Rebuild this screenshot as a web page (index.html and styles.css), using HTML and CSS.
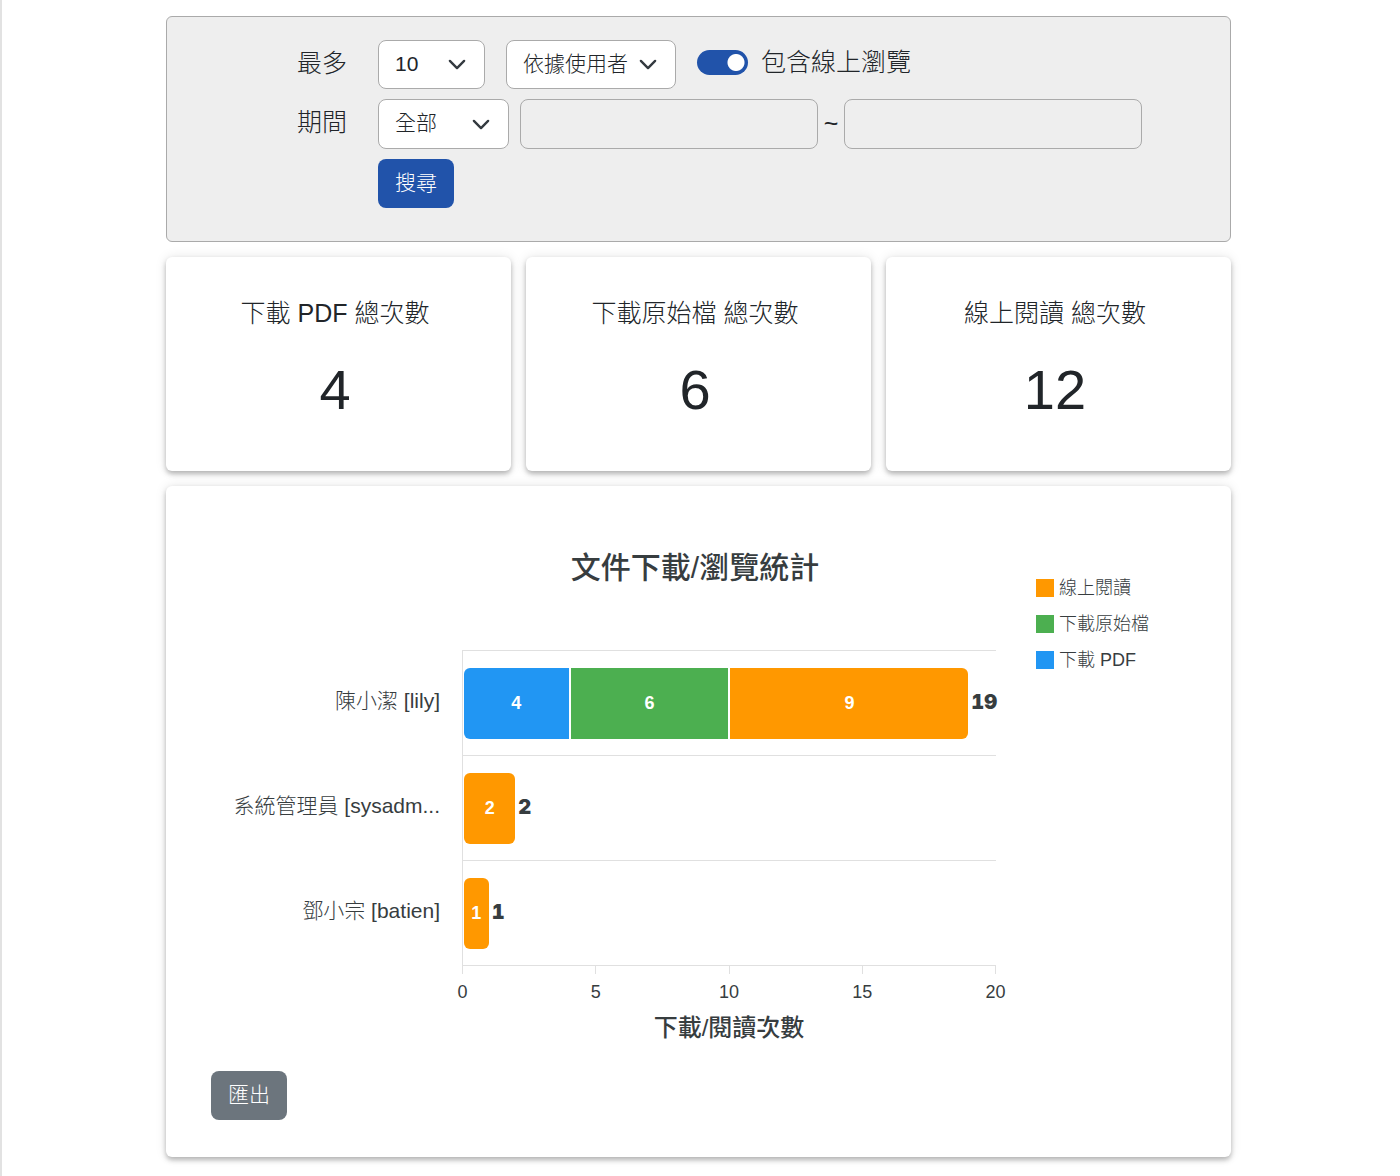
FILE: index.html
```html
<!DOCTYPE html>
<html lang="zh-Hant">
<head>
    <meta charset="UTF-8">
    <meta name="viewport" content="width=device-width, initial-scale=1.0">
    <title>文件下載/瀏覽統計</title>
    <link rel="stylesheet" href="styles.css">
</head>
<body>
    <main class="page">
        <form class="filter">
            <label class="filter-label" for="top-count">最多</label>
            <div class="filter-row">
                <select class="select select-count" id="top-count">
                    <option selected>10</option>
                    <option>20</option>
                    <option>50</option>
                </select>
                <select class="select select-group" aria-label="統計方式">
                    <option selected>依據使用者</option>
                    <option>依據文件</option>
                </select>
                <div class="switch">
                    <input type="checkbox" role="switch" id="include-view" checked>
                    <label for="include-view">包含線上瀏覽</label>
                </div>
            </div>

            <label class="filter-label" for="period">期間</label>
            <div class="filter-row period-row">
                <select class="select select-period" id="period">
                    <option selected>全部</option>
                    <option>自訂</option>
                </select>
                <div class="date-range">
                    <input type="text" class="date" aria-label="開始日期" disabled>
                    <span class="tilde">~</span>
                    <input type="text" class="date" aria-label="結束日期" disabled>
                </div>
            </div>

            <div class="filter-row filter-submit">
                <button type="button" class="btn btn-primary">搜尋</button>
            </div>
        </form>

        <section class="totals">
            <div class="card total">
                <h2>下載 PDF 總次數</h2>
                <p>4</p>
            </div>
            <div class="card total">
                <h2>下載原始檔 總次數</h2>
                <p>6</p>
            </div>
            <div class="card total">
                <h2>線上閱讀 總次數</h2>
                <p>12</p>
            </div>
        </section>

        <section class="card report">
            <div class="chart">
                <h1 class="chart-title">文件下載/瀏覽統計</h1>

                <ul class="legend">
                    <li><span class="swatch view"></span><span>線上閱讀</span></li>
                    <li><span class="swatch original"></span><span>下載原始檔</span></li>
                    <li><span class="swatch pdf"></span><span>下載 PDF</span></li>
                </ul>

                <div class="names">
                    <div>陳小潔 [lily]</div>
                    <div>系統管理員 [sysadm...</div>
                    <div>鄧小宗 [batien]</div>
                </div>

                <!-- bar widths are count / 20 -->
                <div class="plot">
                    <div class="bar-row">
                        <span class="bar pdf" style="width: 20%">4</span>
                        <span class="bar original" style="width: 30%">6</span>
                        <span class="bar view" style="width: 45%">9</span>
                        <span class="sum">19</span>
                    </div>
                    <div class="bar-row">
                        <span class="bar view" style="width: 10%">2</span>
                        <span class="sum">2</span>
                    </div>
                    <div class="bar-row">
                        <span class="bar view" style="width: 5%">1</span>
                        <span class="sum">1</span>
                    </div>
                </div>

                <div class="axis">
                    <div class="ticks">
                        <span>0</span>
                        <span>5</span>
                        <span>10</span>
                        <span>15</span>
                        <span>20</span>
                    </div>
                    <div class="axis-title">下載/閱讀次數</div>
                </div>
            </div>

            <button type="button" class="btn btn-secondary">匯出</button>
        </section>
    </main>
</body>
</html>
```
FILE: styles.css
```css
* {
    margin: 0;
    padding: 0;
    box-sizing: border-box;
    font-family: "Liberation Sans", "Noto Sans CJK TC", sans-serif;
}
body {
    font-size: 25px;
    font-weight: 300;
    color: #212529;
    background: #fff;
}
.page {
    display: flex;
    flex-direction: column;
    gap: 15px;
    min-height: 100vh;
    padding: 16px 169px 18px 164px;
    border-left: 2px solid #e2e2e2;
}

/* filter */
.filter {
    display: grid;
    grid-template-columns: 50px minmax(0, 1fr);
    gap: 10px 31px;
    padding: 23px 88px 33px 130px;
    border: 1px solid #aaa;
    border-radius: 6px;
    background: #eee;
}
.filter-label {
    line-height: 46px;
    white-space: nowrap;
}
.filter-row {
    display: flex;
    gap: 21px;
    height: 49px;
}
.period-row {
    gap: 11px;
    height: 50px;
}
.filter-submit {
    grid-column: 2;
}
.select {
    appearance: none;
    padding: 0 43px 3px 16px;
    border: 1px solid #aaa;
    border-radius: 8px;
    background: #fff url("data:image/svg+xml,%3csvg xmlns='http://www.w3.org/2000/svg' viewBox='0 0 16 16'%3e%3cpath fill='none' stroke='%23343a40' stroke-linecap='round' stroke-linejoin='round' stroke-width='2' d='m2 5 6 6 6-6'/%3e%3c/svg%3e") no-repeat right 17px center / 20px 19px;
    color: #212529;
    font-size: 21px;
    font-weight: 300;
}
.select-count {
    width: 107px;
}
.select-group {
    width: 170px;
}
.select-period {
    width: 131px;
}
.switch {
    display: flex;
    align-items: center;
    gap: 13px;
    height: 45px;
}
.switch input {
    appearance: none;
    width: 51px;
    height: 25px;
    border-radius: 13px;
    background: radial-gradient(circle at 39px 50%, #fff 8px, #2153aa 9px);
}
.switch label {
    padding-bottom: 5px;
}
.date-range {
    display: flex;
    flex: 1;
    min-width: 0;
}
.date {
    flex: 1;
    min-width: 0;
    padding: 0 17px;
    border: 1px solid #aaa;
    border-radius: 8px;
    background: transparent;
    font-size: 21px;
}
.tilde {
    width: 26px;
    line-height: 48px;
    text-align: center;
}
.btn {
    height: 49px;
    padding: 0 17px 5px;
    border: none;
    border-radius: 8px;
    color: #fff;
    font-size: 21px;
    font-weight: 300;
    cursor: pointer;
}
.btn-primary {
    background: #2153aa;
}
.btn-secondary {
    background: #6c757d;
}

/* cards */
.card {
    border-radius: 6px;
    background: #fff;
    box-shadow: 0 3px 5px rgba(0, 0, 0, 0.26), 0 0 12px rgba(0, 0, 0, 0.1);
}
.totals {
    display: grid;
    grid-template-columns: repeat(3, 1fr);
    gap: 15px;
}
.total {
    padding: 38px 22px 40px 15px;
    text-align: center;
}
.total h2 {
    font-size: 25px;
    font-weight: 300;
    line-height: 37px;
}
.total p {
    margin-top: 17px;
    font-size: 56px;
    line-height: 82px;
}
.report {
    padding: 67px 52px 37px 45px;
}

/* chart */
.chart {
    display: grid;
    grid-template-columns: 251px 1fr 183px;
    margin-bottom: 31px;
    color: #373d3f;
}
.chart-title {
    grid-area: 1 / 1 / 2 / 4;
    margin-bottom: 67px;
    font-size: 30px;
    font-weight: 500;
    line-height: 30px;
    text-align: center;
}
.legend {
    grid-area: 1 / 3 / 3 / 4;
    padding: 17px 0 0 40px;
    list-style: none;
    font-size: 18px;
}
.legend li {
    display: flex;
    align-items: center;
    gap: 5px;
    height: 36px;
    line-height: 36px;
}
.legend li span:last-child {
    height: 36px;
}
.swatch {
    width: 18px;
    height: 18px;
}
.pdf {
    background-color: #2196f3;
}
.original {
    background-color: #4caf50;
}
.view {
    background-color: #ff9800;
}
.names {
    grid-area: 2 / 1;
    padding-right: 22px;
    font-size: 21px;
    line-height: 101px;
    text-align: right;
    white-space: nowrap;
}
.names div {
    height: 105px;
}
.plot {
    grid-area: 2 / 2;
    border-left: 1px solid #e0e0e0;
    border-bottom: 1px solid #e0e0e0;
}
.bar-row {
    display: flex;
    align-items: center;
    height: 105px;
    border-top: 1px solid #e0e0e0;
}
.bar {
    flex: none;
    height: 73px;
    border: 1px solid transparent;
    background-clip: padding-box;
    color: #fff;
    font-size: 18px;
    font-weight: 700;
    line-height: 71px;
    text-align: center;
}
.bar:first-child {
    border-top-left-radius: 7px;
    border-bottom-left-radius: 7px;
}
.bar:nth-last-child(2) {
    border-top-right-radius: 7px;
    border-bottom-right-radius: 7px;
}
.sum {
    margin-left: 2px;
    padding-bottom: 2px;
    font-family: Inter, "Liberation Sans", sans-serif;
    font-size: 20px;
    font-weight: 900;
    font-variant-numeric: tabular-nums;
}
.axis {
    grid-area: 3 / 2;
}
.ticks {
    display: flex;
    justify-content: space-between;
    font-size: 18px;
    line-height: 20px;
}
.ticks span {
    display: flex;
    flex-direction: column;
    align-items: center;
    gap: 8px;
    width: 1px;
}
.ticks span::before {
    content: "";
    width: 1px;
    height: 8px;
    background: #e0e0e0;
}
.axis-title {
    margin-top: 14px;
    font-size: 24px;
    font-weight: 500;
    line-height: 24px;
    text-align: center;
}
```
